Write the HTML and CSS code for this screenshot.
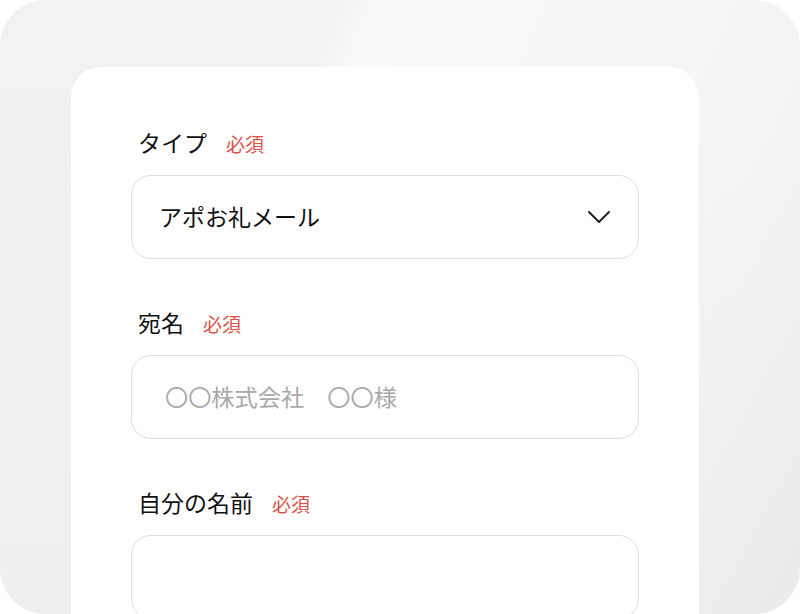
FILE: index.html
```html
<!DOCTYPE html>
<html lang="ja">
<head>
<meta charset="utf-8">
<link rel="stylesheet" href="styles.css">
</head>
<body>
<div class="frame">
  <div class="card">
    <div class="field">
      <div class="label"><span class="name">タイプ</span><span class="req">必須</span></div>
      <div class="box select">
        <span class="value">アポお礼メール</span>
        <svg class="chev" width="24" height="14" viewBox="0 0 24 14"><path d="M2 2 L12 12 L22 2" fill="none" stroke="#222" stroke-width="2" stroke-linecap="round" stroke-linejoin="round"/></svg>
      </div>
    </div>
    <div class="field">
      <div class="label"><span class="name">宛名</span><span class="req">必須</span></div>
      <div class="box input"><span class="placeholder">〇〇株式会社　〇〇様</span></div>
    </div>
    <div class="field">
      <div class="label"><span class="name">自分の名前</span><span class="req">必須</span></div>
      <div class="box input"></div>
    </div>
  </div>
</div>
</body>
</html>
```
FILE: styles.css
```css
html, body {
  margin: 0;
  padding: 0;
  background: #ffffff;
}
body {
  font-family: "Noto Sans CJK JP", "Noto Sans", sans-serif;
}
.frame {
  width: 800px;
  height: 614px;
  box-sizing: border-box;
  border-radius: 46px;
  overflow: hidden;
  padding: 67px 101px 0 71px;
  background:
    linear-gradient(112deg, rgba(255,255,255,0) 0%, rgba(255,255,255,0) 32%, rgba(255,255,255,0.6) 36%, rgba(255,255,255,0.45) 60%, rgba(255,255,255,0.1) 80%, rgba(0,0,0,0.02) 100%),
    linear-gradient(180deg, #f2f2f2 0%, #efefef 100%);
}
.card {
  width: 628px;
  height: 600px;
  background: #ffffff;
  border-radius: 30px;
  box-sizing: border-box;
  padding: 59px 60px 0 60px;
}
.field {
  margin-bottom: 47px;
}
.label {
  display: flex;
  align-items: baseline;
  height: 32px;
  line-height: 32px;
  padding-left: 7px;
  margin-bottom: 17px;
}
.name {
  font-size: 23px;
  color: #111111;
}
.req {
  font-size: 19px;
  color: #dc5048;
  margin-left: 19px;
}
.box {
  height: 84px;
  box-sizing: border-box;
  border: 1.5px solid #dedede;
  border-radius: 20px;
  display: flex;
  align-items: center;
  justify-content: space-between;
}
.select {
  padding: 0 27px 2px 27px;
}
.value {
  font-size: 23px;
  color: #111111;
}
.chev {
  display: block;
  margin-top: 2px;
}
.input {
  padding: 0 33px 2px 33px;
}
.placeholder {
  font-size: 23.2px;
  color: #a9a9a9;
}
```
